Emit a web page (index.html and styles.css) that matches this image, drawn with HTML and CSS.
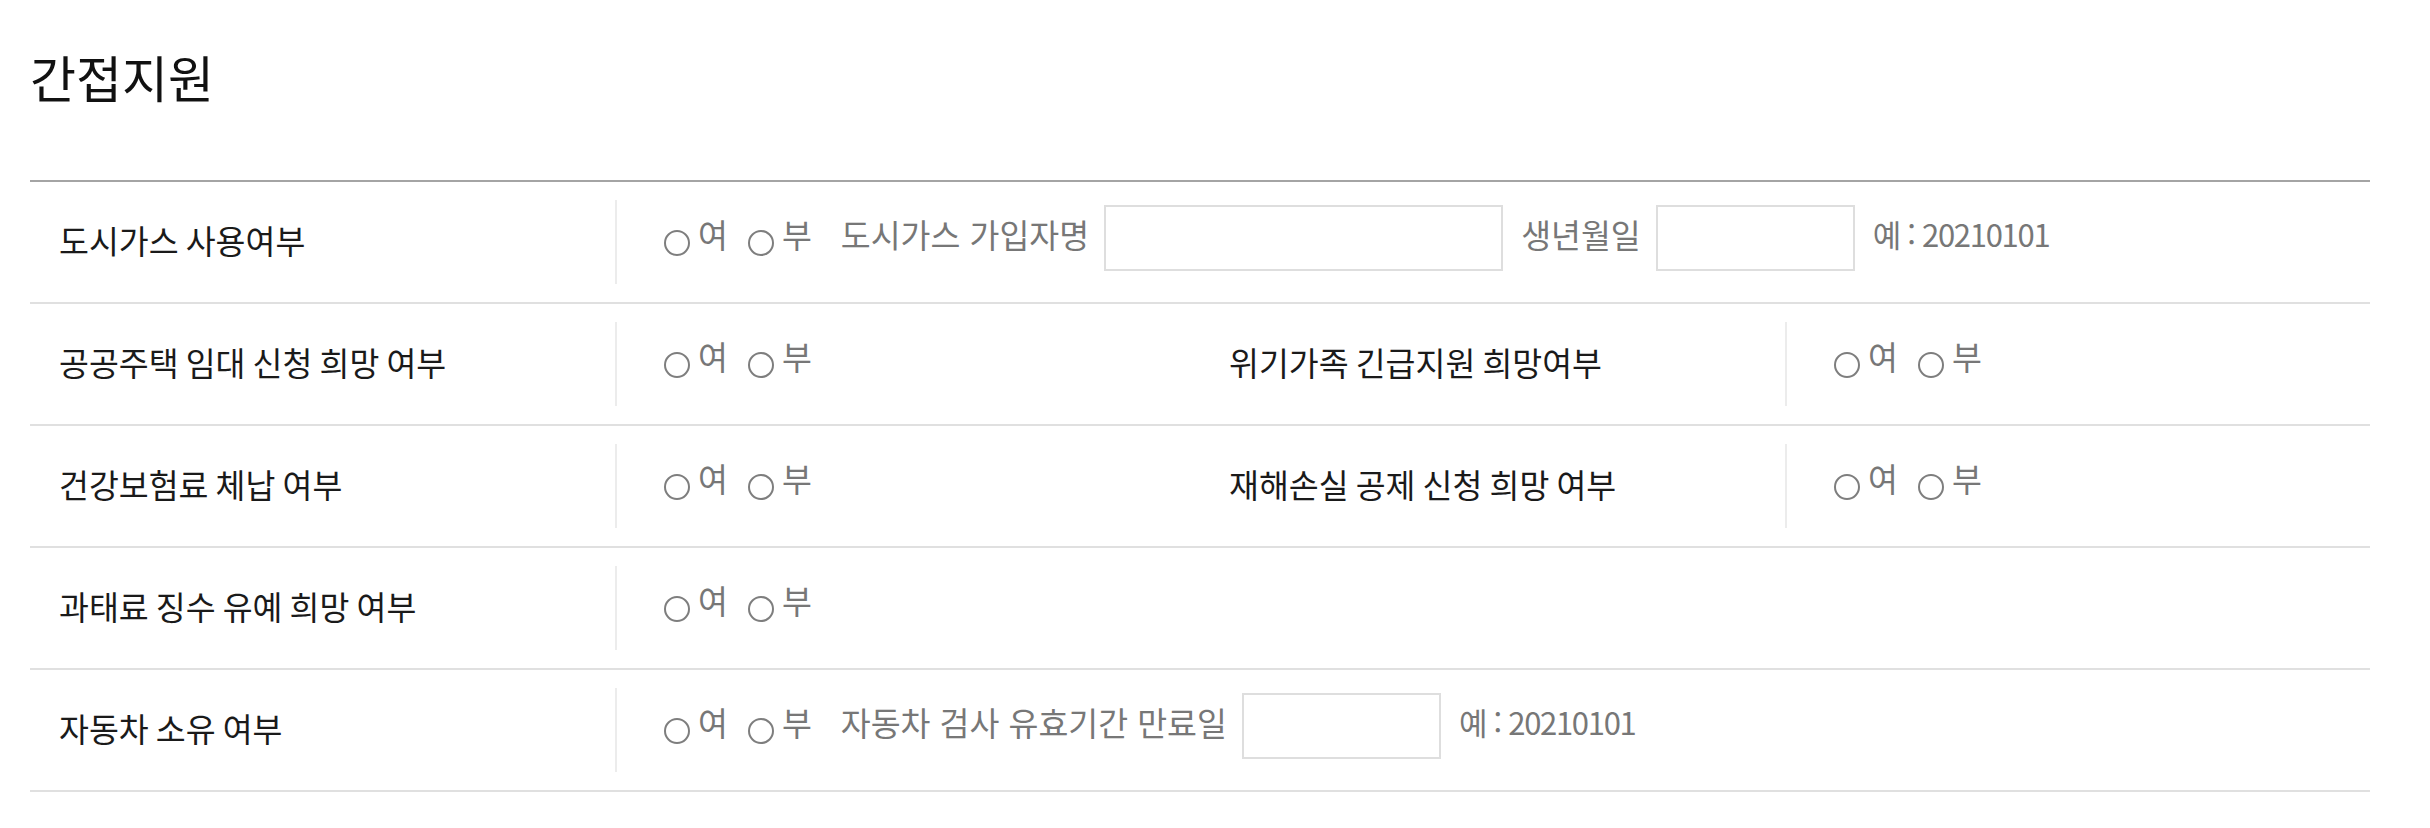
FILE: index.html
```html
<!DOCTYPE html>
<html lang="ko">
<head>
<meta charset="utf-8">
<title>간접지원</title>
<link rel="stylesheet" href="styles.css">
</head>
<body>
<div class="page">
  <h1 class="title">간접지원</h1>
  <div class="table">
    <div class="row">
      <div class="th">도시가스 사용여부</div>
      <div class="td span3">
        <span class="radios">
          <label class="opt"><input type="radio" name="r1"><span class="txt">여</span></label>
          <label class="opt"><input type="radio" name="r1"><span class="txt">부</span></label>
        </span>
        <span class="lbl">도시가스 가입자명</span>
        <input class="field wide" type="text">
        <span class="lbl">생년월일</span>
        <input class="field" type="text">
        <span class="hint">예 : 20210101</span>
      </div>
    </div>
    <div class="row">
      <div class="th">공공주택 임대 신청 희망 여부</div>
      <div class="td">
        <span class="radios">
          <label class="opt"><input type="radio" name="r2"><span class="txt">여</span></label>
          <label class="opt"><input type="radio" name="r2"><span class="txt">부</span></label>
        </span>
      </div>
      <div class="th">위기가족 긴급지원 희망여부</div>
      <div class="td">
        <span class="radios">
          <label class="opt"><input type="radio" name="r3"><span class="txt">여</span></label>
          <label class="opt"><input type="radio" name="r3"><span class="txt">부</span></label>
        </span>
      </div>
    </div>
    <div class="row">
      <div class="th">건강보험료 체납 여부</div>
      <div class="td">
        <span class="radios">
          <label class="opt"><input type="radio" name="r4"><span class="txt">여</span></label>
          <label class="opt"><input type="radio" name="r4"><span class="txt">부</span></label>
        </span>
      </div>
      <div class="th">재해손실 공제 신청 희망 여부</div>
      <div class="td">
        <span class="radios">
          <label class="opt"><input type="radio" name="r5"><span class="txt">여</span></label>
          <label class="opt"><input type="radio" name="r5"><span class="txt">부</span></label>
        </span>
      </div>
    </div>
    <div class="row">
      <div class="th">과태료 징수 유예 희망 여부</div>
      <div class="td span3">
        <span class="radios">
          <label class="opt"><input type="radio" name="r6"><span class="txt">여</span></label>
          <label class="opt"><input type="radio" name="r6"><span class="txt">부</span></label>
        </span>
      </div>
    </div>
    <div class="row">
      <div class="th">자동차 소유 여부</div>
      <div class="td span3">
        <span class="radios">
          <label class="opt"><input type="radio" name="r7"><span class="txt">여</span></label>
          <label class="opt"><input type="radio" name="r7"><span class="txt">부</span></label>
        </span>
        <span class="lbl">자동차 검사 유효기간 만료일</span>
        <input class="field" type="text">
        <span class="hint">예 : 20210101</span>
      </div>
    </div>
  </div>
</div>
</body>
</html>
```

FILE: styles.css
```css
html, body {
  margin: 0;
  padding: 0;
  background: #ffffff;
}

body {
  font-family: "Noto Sans CJK KR", "Noto Sans", sans-serif;
  color: #1a1a1a;
}

.page {
  padding: 0 60px 0 30px;
  width: 2340px;
}

.title {
  margin: 0;
  padding: 43px 0 71px 0;
  font-size: 50px;
  line-height: 66px;
  font-weight: 400;
  color: #111111;
}

.table {
  border-top: 2px solid #a4a4a4;
}

.row {
  display: grid;
  grid-template-columns: 585px 585px 585px 585px;
  padding: 18px 0;
  border-bottom: 2px solid #e0e0e0;
}

.th {
  height: 84px;
  box-sizing: border-box;
  display: flex;
  align-items: center;
  padding: 0 0 6px 29px;
  font-size: 32.5px;
  word-spacing: -2px;
  color: #1a1a1a;
  white-space: nowrap;
}

.td {
  height: 84px;
  box-sizing: border-box;
  display: flex;
  align-items: center;
  padding: 0 0 8px 47px;
  border-left: 2px solid #ececec;
  font-size: 32.5px;
  color: #777777;
  white-space: nowrap;
}

.span3 {
  grid-column: span 3;
}

.radios {
  display: inline-flex;
  align-items: center;
  margin-right: 29px;
}

.opt {
  display: inline-flex;
  align-items: center;
  margin-right: 20px;
}

.opt:last-child {
  margin-right: 0;
}

.opt input {
  -webkit-appearance: none;
  appearance: none;
  width: 26px;
  height: 26px;
  margin: 10px 8px 0 0;
  box-sizing: border-box;
  border: 2px solid #7e7e7e;
  border-radius: 50%;
  background: #ffffff;
}

.txt {
  color: #777777;
  margin-bottom: 9px;
}

.lbl {
  color: #777777;
  margin-right: 15px;
  margin-bottom: 9px;
}

.field {
  width: 199px;
  height: 66px;
  box-sizing: border-box;
  margin: 0 18px 0 0;
  padding: 0 10px;
  border: 2px solid #dedede;
  background: #ffffff;
  font-family: inherit;
  font-size: 26px;
  outline: none;
}

.field.wide {
  width: 399px;
}

.hint {
  color: #777777;
  font-size: 31px;
  letter-spacing: -1.3px;
  margin-bottom: 9px;
}
```
